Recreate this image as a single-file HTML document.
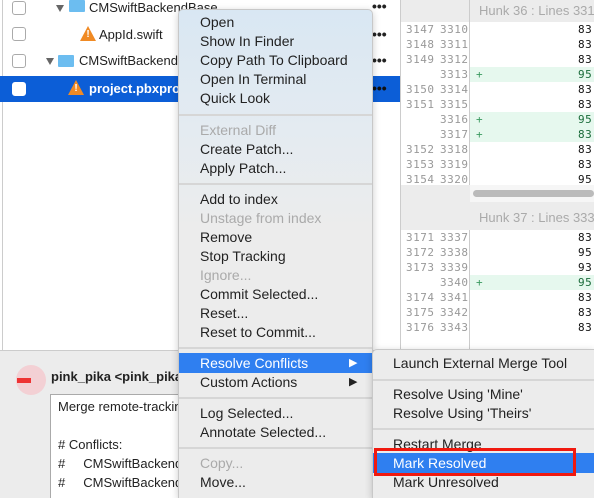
<!DOCTYPE html><html><head><style>
*{margin:0;padding:0;box-sizing:border-box}
html,body{width:594px;height:498px;overflow:hidden}
body{position:relative;background:#fff;font-family:"Liberation Sans",sans-serif;font-size:14px;color:#222}
.a{position:absolute;white-space:nowrap}
.cb{position:absolute;left:12px;width:14px;height:14px;border:1px solid #aaa;border-radius:3px;background:#fff}
.row{position:absolute;left:0;width:400px;height:26px}
.dots{position:absolute;left:372px;font-weight:bold;font-size:14px}
.fold{position:absolute;width:16px;height:12px;background:#6cbdf0;border-radius:1px}
.tri{position:absolute;width:0;height:0;border-left:4px solid transparent;border-right:4px solid transparent;border-top:7px solid #666}
.warn{position:absolute;width:0;height:0;border-left:8px solid transparent;border-right:8px solid transparent;border-bottom:15px solid #f08a24}
.warn b{position:absolute;left:-2px;top:3px;color:#fff;font-size:10px;font-weight:bold;width:4px;text-align:center}
.ln{position:absolute;left:400px;width:194px;height:15px;line-height:15px;font-family:"DejaVu Sans Mono","Liberation Mono",monospace;font-size:11px;color:#999}
.ln span{position:absolute;letter-spacing:0.5px}
.mi{position:absolute;left:200px;height:19px;line-height:19px;white-space:nowrap}
.dis{color:#aaa}
.sep{position:absolute;left:179px;width:193px;height:2px;background:#d6d6d6}
.si{position:absolute;left:393px;height:19px;line-height:19px;white-space:nowrap}
.tl{position:absolute;left:58px;font-size:13px;height:19px;line-height:19px}
</style></head><body>
<div class="a" style="left:2px;top:0;width:1px;height:350px;background:#ccc"></div>
<div class="row" style="top:-4px"><div class="cb" style="top:5px"></div><div class="tri" style="left:56px;top:9px"></div><div class="fold" style="left:69px;top:4px"></div><div class="a" style="left:89px;top:4px;font-size:13px">CMSwiftBackendBase</div><div class="dots" style="top:2px">•••</div></div>
<div class="row" style="top:22px"><div class="cb" style="top:5px"></div><div class="warn" style="left:80px;top:4px"><b>!</b></div><div class="a" style="left:99px;top:5px;font-size:13px">AppId.swift</div><div class="dots" style="top:4px">•••</div></div>
<div class="row" style="top:48px"><div class="cb" style="top:6px"></div><div class="tri" style="left:46px;top:10px"></div><div class="fold" style="left:58px;top:7px"></div><div class="a" style="left:79px;top:5px;font-size:13px">CMSwiftBackendAPI</div><div class="dots" style="top:4px">•••</div></div>
<div class="row" style="top:76px;background:#0c5ed7;color:#fff"><div class="cb" style="top:6px;border-color:#fff"></div><div class="warn" style="left:68px;top:4px"><b style="color:#fff">!</b></div><div class="a" style="left:89px;top:5px;font-size:13px;font-weight:bold">project.pbxproj</div><div class="dots" style="top:4px;color:#111">•••</div></div>
<!-- diff -->
<div class="a" style="left:400px;top:0;width:1px;height:350px;background:#ccc"></div>
<div class="a" style="left:401px;top:0;width:193px;height:22px;background:#ececec"></div>
<div class="a" style="left:479px;top:3px;color:#aaa;font-size:13px">Hunk 36 : Lines 3310</div>
<div class="a" style="left:469px;top:0;width:1px;height:350px;background:#ccc"></div>
<div class="a" style="left:401px;top:185px;width:193px;height:45px;background:#ececec"></div>
<div class="a" style="left:470px;top:185px;width:124px;height:17px;background:#f6f6f6"></div>
<div class="a" style="left:473px;top:190px;width:121px;height:7px;border-radius:4px;background:#bbb"></div>
<div class="a" style="left:479px;top:210px;color:#aaa;font-size:13px">Hunk 37 : Lines 3337</div>
<div id="lns"></div>
<!-- bottom -->
<div class="a" style="left:0;top:350px;width:594px;height:148px;background:#ececec;border-top:1px solid #ccc"></div>
<div class="a" style="left:16px;top:365px;width:30px;height:30px;border-radius:15px;background:#f3d0d4"></div>
<div class="a" style="left:17px;top:378px;width:14px;height:5px;background:#e33"></div>
<div class="a" style="left:51px;top:369px;font-weight:bold;font-size:13px">pink_pika &lt;pink_pika</div>
<div class="a" style="left:50px;top:394px;width:360px;height:104px;background:#fff;border:1px solid #aaa;border-bottom:none"></div>
<div class="tl" style="top:397px">Merge remote-tracking</div>
<div class="tl" style="top:435px"># Conflicts:</div>
<div class="tl" style="top:454px">#&nbsp;&nbsp;&nbsp;&nbsp;&nbsp;CMSwiftBackend</div>
<div class="tl" style="top:473px">#&nbsp;&nbsp;&nbsp;&nbsp;&nbsp;CMSwiftBackend</div>
<!-- menu -->
<div class="a" style="left:178px;top:9px;width:195px;height:489px;border-radius:5px 5px 0 0;border:1px solid #c8c8c8;border-bottom:none;background:linear-gradient(#d9e7f3 0,#e4ebf1 120px,#ececec 220px,#ececec);box-shadow:0 2px 8px rgba(0,0,0,.2)"></div>
<div class="mi" style="top:13px">Open</div>
<div class="mi" style="top:32px">Show In Finder</div>
<div class="mi" style="top:51px">Copy Path To Clipboard</div>
<div class="mi" style="top:70px">Open In Terminal</div>
<div class="mi" style="top:89px">Quick Look</div>
<div class="sep" style="top:114px"></div>
<div class="mi dis" style="top:121px">External Diff</div>
<div class="mi" style="top:140px">Create Patch...</div>
<div class="mi" style="top:159px">Apply Patch...</div>
<div class="sep" style="top:183px"></div>
<div class="mi" style="top:190px">Add to index</div>
<div class="mi dis" style="top:209px">Unstage from index</div>
<div class="mi" style="top:228px">Remove</div>
<div class="mi" style="top:247px">Stop Tracking</div>
<div class="mi dis" style="top:266px">Ignore...</div>
<div class="mi" style="top:285px">Commit Selected...</div>
<div class="mi" style="top:304px">Reset...</div>
<div class="mi" style="top:323px">Reset to Commit...</div>
<div class="sep" style="top:347px"></div>
<div class="a" style="left:179px;top:353px;width:193px;height:20px;background:#2f7ff0"></div>
<div class="mi" style="top:354px;color:#fff">Resolve Conflicts</div>
<div class="a" style="left:349px;top:354px;color:#fff;font-size:11px;line-height:19px">▶</div>
<div class="mi" style="top:373px">Custom Actions</div>
<div class="a" style="left:349px;top:373px;font-size:11px;line-height:19px">▶</div>
<div class="sep" style="top:397px"></div>
<div class="mi" style="top:404px">Log Selected...</div>
<div class="mi" style="top:423px">Annotate Selected...</div>
<div class="sep" style="top:447px"></div>
<div class="mi dis" style="top:454px">Copy...</div>
<div class="mi" style="top:473px">Move...</div>
<!-- submenu -->
<div class="a" style="left:372px;top:349px;width:222px;height:149px;border-radius:5px 0 0 0;border:1px solid #c8c8c8;border-bottom:none;border-right:none;background:#ececec;box-shadow:0 2px 8px rgba(0,0,0,.2)"></div>
<div class="si" style="top:354px">Launch External Merge Tool</div>
<div class="a" style="left:373px;top:379px;width:221px;height:2px;background:#d6d6d6"></div>
<div class="si" style="top:385px">Resolve Using 'Mine'</div>
<div class="si" style="top:404px">Resolve Using 'Theirs'</div>
<div class="a" style="left:373px;top:428px;width:221px;height:2px;background:#d6d6d6"></div>
<div class="si" style="top:435px">Restart Merge</div>
<div class="si" style="top:473px">Mark Unresolved</div>
<div class="a" style="left:373px;top:453px;width:221px;height:20px;background:#2f7ff0"></div>
<div class="si" style="top:454px;color:#fff">Mark Resolved</div>
<div class="a" style="left:374px;top:448px;width:202px;height:28px;border:3px solid #f0190f"></div>
<script>
var L=[["3147","3310","83"],["3148","3311","83"],["3149","3312","83"],["","3313","95",1],["3150","3314","83"],["3151","3315","83"],["","3316","95",1],["","3317","83",1],["3152","3318","83"],["3153","3319","83"],["3154","3320","95"]];
var M=[["3171","3337","83"],["3172","3338","95"],["3173","3339","93"],["","3340","95",1],["3174","3341","83"],["3175","3342","83"],["3176","3343","83"]];
var h="";
function add(a,t){a.forEach(function(r,i){var y=t+i*15;
h+='<div class="ln" style="top:'+y+'px">'+(r[3]?'<span style="left:70px;width:124px;height:15px;background:#e6f8ee"></span><span style="left:76px;color:#3a9a60">+</span>':'')+'<span style="left:6px">'+r[0]+'</span><span style="left:40px">'+r[1]+'</span><span style="left:178px;color:'+(r[3]?'#1a6b3a':'#111')+'">'+r[2]+'</span></div>';});}
add(L,22);add(M,230);
document.getElementById("lns").innerHTML=h;
</script>
</body></html>
